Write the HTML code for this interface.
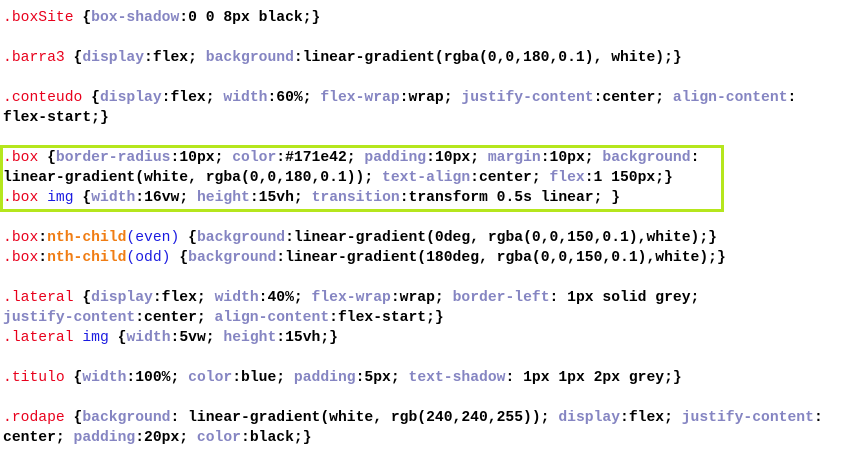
<!DOCTYPE html>
<html><head><meta charset="utf-8"><style>
html,body{margin:0;padding:0;background:#fff;width:850px;height:452px;overflow:hidden}
pre{margin:0;position:absolute;left:3px;top:8px;font-family:"Liberation Mono",monospace;font-size:14.7px;line-height:20px;font-weight:bold;color:#000;white-space:pre}
.s{color:#e8001c;font-weight:normal}
.p{color:#8585c2}
.b{color:#1a1ae0;font-weight:normal}
.o{color:#f07d14}
.hl{position:absolute;left:0;top:145px;width:718px;height:61px;border:3px solid #b5e61d}
</style></head><body>
<div class="hl"></div>
<pre><span class="s">.boxSite</span> {<span class="p">box-shadow</span>:0 0 8px black;}

<span class="s">.barra3</span> {<span class="p">display</span>:flex; <span class="p">background</span>:linear-gradient(rgba(0,0,180,0.1), white);}

<span class="s">.conteudo</span> {<span class="p">display</span>:flex; <span class="p">width</span>:60%; <span class="p">flex-wrap</span>:wrap; <span class="p">justify-content</span>:center; <span class="p">align-content</span>:
flex-start;}

<span class="s">.box</span> {<span class="p">border-radius</span>:10px; <span class="p">color</span>:#171e42; <span class="p">padding</span>:10px; <span class="p">margin</span>:10px; <span class="p">background</span>:
linear-gradient(white, rgba(0,0,180,0.1)); <span class="p">text-align</span>:center; <span class="p">flex</span>:1 150px;}
<span class="s">.box</span> <span class="b">img</span> {<span class="p">width</span>:16vw; <span class="p">height</span>:15vh; <span class="p">transition</span>:transform 0.5s linear; }

<span class="s">.box</span>:<span class="o">nth-child</span><span class="b">(even)</span> {<span class="p">background</span>:linear-gradient(0deg, rgba(0,0,150,0.1),white);}
<span class="s">.box</span>:<span class="o">nth-child</span><span class="b">(odd)</span> {<span class="p">background</span>:linear-gradient(180deg, rgba(0,0,150,0.1),white);}

<span class="s">.lateral</span> {<span class="p">display</span>:flex; <span class="p">width</span>:40%; <span class="p">flex-wrap</span>:wrap; <span class="p">border-left</span>: 1px solid grey;
<span class="p">justify-content</span>:center; <span class="p">align-content</span>:flex-start;}
<span class="s">.lateral</span> <span class="b">img</span> {<span class="p">width</span>:5vw; <span class="p">height</span>:15vh;}

<span class="s">.titulo</span> {<span class="p">width</span>:100%; <span class="p">color</span>:blue; <span class="p">padding</span>:5px; <span class="p">text-shadow</span>: 1px 1px 2px grey;}

<span class="s">.rodape</span> {<span class="p">background</span>: linear-gradient(white, rgb(240,240,255)); <span class="p">display</span>:flex; <span class="p">justify-content</span>:
center; <span class="p">padding</span>:20px; <span class="p">color</span>:black;}</pre>
</body></html>
